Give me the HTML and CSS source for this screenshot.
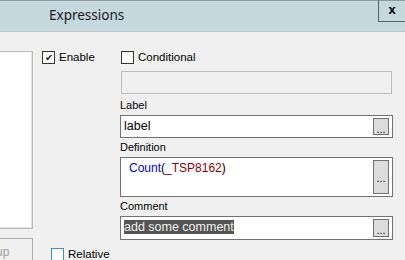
FILE: index.html
```html
<!DOCTYPE html>
<html lang="en">
<head>
    <meta charset="UTF-8">
    <meta name="viewport" content="width=device-width, initial-scale=1.0">
    <link rel="stylesheet" href="styles.css">
</head>
<body>

<div class="titlebar">
    <span class="title">Expressions</span>
    <span class="close">x</span>
</div>

<div class="panel">
    <div class="side">
        <div class="listbox"></div>
        <div class="side-btn">up</div>
    </div>

    <div class="mid">
        <label class="check">
            <span class="box checked">&#10004;</span>Enable
        </label>
        <label class="check relative">
            <span class="box focus"></span>Relative
        </label>
    </div>

    <div class="main">
        <label class="check">
            <span class="box"></span>Conditional
        </label>
        <div class="field disabled"></div>

        <div class="caption first">Label</div>
        <div class="field">
            <span class="value">label</span>
            <span class="dots">...</span>
        </div>

        <div class="caption">Definition</div>
        <div class="field tall">
            <span class="value code"><span class="fn">Count</span>(<span class="var">_TSP8162</span>)</span>
            <span class="dots">...</span>
        </div>

        <div class="caption">Comment</div>
        <div class="field comment">
            <span class="value"><span class="selected">add some comment</span></span>
            <span class="dots">...</span>
        </div>
    </div>
</div>

</body>
</html>
```

FILE: styles.css
```css
body {
    margin: 0;
    padding: 0;
    width: 405px;
    height: 260px;
    overflow: hidden;
    background: #f0f0f0;
    font-family: 'Liberation Sans', Arial, sans-serif;
    font-size: 11px;
    color: #000;
}
.titlebar {
    height: 30px;
    border-top: 1px solid #8c9ca2;
    background: #c5d8de;
    display: flex;
    align-items: flex-start;
    border-bottom: 1px solid #b7c7cc;
}
.title {
    font-family: 'Noto Sans', sans-serif;
    font-size: 13.5px;
    color: #1a1a1a;
    margin-left: 49px;
    line-height: 29px;
}
.close {
    margin-left: auto;
    width: 26px;
    height: 21px;
    border-left: 1px solid #5a6266;
    border-bottom: 1px solid #5a6266;
    text-align: center;
    font-weight: bold;
    font-size: 13px;
    line-height: 19px;
    margin-top: -1px;
}
.panel {
    display: flex;
    padding-top: 19px;
    height: 209px;
}
.side {
    width: 33px;
    display: flex;
    flex-direction: column;
}
.listbox {
    height: 182px;
    border: 1px solid #b9b9b9;
    border-left: none;
    background: #fff;
    box-shadow: inset -1px -1px 0 #e3e3e3;
}
.side-btn {
    margin-top: 9px;
    height: 22px;
    border: 1px solid #adadad;
    border-left: none;
    border-bottom: none;
    color: #a0a0a0;
    font-size: 12px;
    line-height: 26px;
    text-indent: -4px;
    overflow: hidden;
}
.mid {
    width: 86px;
    display: flex;
    flex-direction: column;
    padding-left: 9px;
    box-sizing: border-box;
}
.check {
    display: flex;
    align-items: center;
    height: 13px;
    line-height: 13px;
    font-size: 11.5px;
}
.box {
    width: 11px;
    height: 11px;
    border: 1px solid #333;
    background: #fff;
    margin-right: 4px;
    font-size: 10px;
    line-height: 11px;
    text-align: center;
    color: #222;
}
.box.focus {
    border-color: #3c8fcf;
}
.relative {
    margin-left: 9px;
    margin-top: 184px;
}
.main {
    width: 273px;
    margin-left: 1px;
}
.main .check {
    margin-left: 1px;
}
.field {
    display: flex;
    justify-content: space-between;
    border: 1px solid #727272;
    background: #fff;
    padding: 2px 3px 2px 3px;
    box-sizing: border-box;
    height: 23px;
}
.field.disabled {
    margin: 7px 1px 0 1px;
    border-color: #bcbcbc;
    background: #f0f0f0;
}
.field.tall {
    height: 40px;
}
.field.comment {
    height: 24px;
}
.caption {
    font-size: 11px;
    line-height: 13px;
    margin-top: 3px;
    margin-bottom: 3px;
}
.caption.first {
    margin-top: 5px;
}
.value {
    font-size: 12.5px;
    line-height: 17px;
}
.code {
    font-size: 12px;
    padding-left: 5px;
}
.fn {
    color: #0000ee;
}
.var {
    color: #8b0000;
}
.selected {
    background: #555;
    color: #f0f0f0;
}
.dots {
    width: 16px;
    border: 1px solid #707070;
    background: #dcdcdc;
    font-size: 11px;
    line-height: 20px;
    text-align: center;
    box-sizing: border-box;
}
.field.tall .dots {
    line-height: 34px;
}
```
